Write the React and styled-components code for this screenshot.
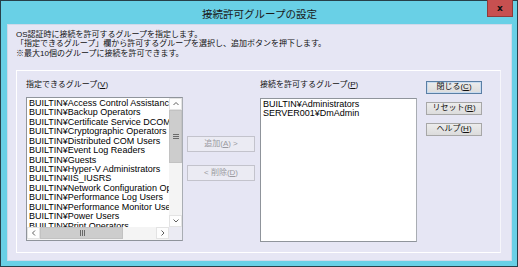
import React from "react";
import styled, { createGlobalStyle } from "styled-components";

const Global = createGlobalStyle`
  html, body { margin: 0; padding: 0; background: #2a3f47; }
  body { width: 518px; height: 267px; overflow: hidden; }
  * { box-sizing: border-box; }
`;

const FONT = `"Liberation Sans", "Noto Sans CJK JP", sans-serif`;
const LIST_FONT = `"Liberation Sans", "Noto Sans CJK JP", sans-serif`;

const Window = styled.div`
  width: 518px;
  height: 267px;
  border: 1px solid #27404a;
  background: #69d0e6;
  display: flex;
  flex-direction: column;
  padding: 0 5px 5px 6px;
  font-family: ${FONT};
  color: #000;
`;

const TitleBar = styled.div`
  height: 23px;
  display: grid;
  grid-template-columns: 1fr auto 1fr;
  align-items: center;
`;

const Title = styled.div`
  grid-column: 2;
  font-size: 10.5px;
  line-height: 12px;
  color: #1a1a1a;
  margin-top: 2px;
`;

const CloseButton = styled.div`
  grid-column: 3;
  justify-self: end;
  align-self: start;
  width: 26px;
  height: 17px;
  margin-top: -1px;
  margin-right: -1px;
  background: #c75050;
  border: 1px solid #8f3a3a;
  border-top: none;
  display: flex;
  align-items: center;
  justify-content: center;
  font-family: "DejaVu Sans", sans-serif;
  font-weight: bold;
  font-size: 9px;
  color: #111;
`;

const Client = styled.div`
  flex: 1;
  background: #e6e6f4;
  border: 1px solid #cfd9ea;
  display: flex;
  flex-direction: column;
  padding: 5px 10px 7px 8px;
`;

const Description = styled.div`
  font-size: 8px;
  line-height: 9.3px;
  color: #111;
  white-space: nowrap;
  margin-bottom: 12px;
`;

const Group = styled.div`
  flex: 1;
  border: 1px solid #ffffff;
  border-right-color: #f6f6fb;
  display: flex;
  align-items: flex-start;
  padding: 0 0 0 9px;
`;

const Column = styled.div`
  display: flex;
  flex-direction: column;
  margin-top: ${(p) => p.$top || 0}px;
  margin-left: ${(p) => p.$left || 0}px;
`;

const Label = styled.div`
  font-size: 8px;
  line-height: 12px;
  height: 12px;
  margin-bottom: ${(p) => p.$gap}px;
  white-space: nowrap;
  color: #111;
`;

const ListBox = styled.div`
  width: 157px;
  height: 144px;
  border: 1px solid #8f949b;
  border-right-color: #a9adb3;
  background: #fff;
  display: grid;
  grid-template-columns: ${(p) => (p.$scroll ? "1fr 13px" : "1fr")};
  grid-template-rows: ${(p) => (p.$scroll ? "1fr 13px" : "1fr")};
  overflow: hidden;
`;

const ListContent = styled.div`
  overflow: hidden;
  padding: 1px 0 0 2px;
  font-family: ${LIST_FONT};
  font-size: 9px;
  line-height: 9.45px;
  white-space: nowrap;
  color: #000;
`;

const Item = styled.div`
  height: 9.45px;
`;

const VScroll = styled.div`
  display: flex;
  flex-direction: column;
  background: #f4f4f4;
`;

const HScroll = styled.div`
  display: flex;
  background: #f4f4f4;
`;

const Arrow = styled.div`
  width: 13px;
  height: 12px;
  flex: none;
  display: flex;
  align-items: center;
  justify-content: center;
  background: #fdfdfd;
  border: 1px solid #e3e3e3;
`;

const Thumb = styled.div`
  flex: none;
  background: #cdcdcd;
  border: 1px solid #c2c2c2;
  display: flex;
  align-items: center;
  justify-content: center;
  ${(p) => (p.$h ? `width: 83px; height: 12px;` : `height: 53px; width: 13px;`)}
`;

const Track = styled.div`
  flex: 1;
`;

const Corner = styled.div`
  background: #ebebf3;
`;

const Button = styled.div`
  width: ${(p) => p.$w}px;
  height: ${(p) => p.$h}px;
  margin-bottom: ${(p) => p.$gap || 0}px;
  display: flex;
  align-items: center;
  justify-content: center;
  font-size: 8px;
  line-height: 10px;
  white-space: nowrap;
  border: 1px solid ${(p) => (p.$disabled ? "#c3c3cc" : p.$default ? "#5a7fa5" : "#a7a7a7")};
  background: ${(p) =>
    p.$disabled ? "#ebebf3" : "linear-gradient(#ececec, #dcdcdc)"};
  color: ${(p) => (p.$disabled ? "#9a9aa0" : "#111")};
  box-shadow: ${(p) => (p.$default ? "inset 0 0 0 1px #c8dbef" : "none")};
`;

const Chevron = ({ dir }) => {
  const paths = {
    up: "M1.5 5 L4 2.5 L6.5 5",
    down: "M1.5 2.5 L4 5 L6.5 2.5",
    left: "M5 1.5 L2.5 4 L5 6.5",
    right: "M2.5 1.5 L5 4 L2.5 6.5",
  };
  return (
    <svg width="8" height="8" viewBox="0 0 8 8">
      <path d={paths[dir]} fill="none" stroke="#606060" strokeWidth="1" />
    </svg>
  );
};

const GripV = () => (
  <svg width="6" height="6" viewBox="0 0 6 6">
    <path d="M0 1.5 H6 M0 3.5 H6 M0 5.5 H6" stroke="#6a6a6a" strokeWidth="1" />
  </svg>
);

const GripH = () => (
  <svg width="6" height="6" viewBox="0 0 6 6">
    <path d="M1.5 0 V6 M3.5 0 V6 M5.5 0 V6" stroke="#6a6a6a" strokeWidth="1" />
  </svg>
);

const available = [
  "BUILTIN¥Access Control Assistance Operators",
  "BUILTIN¥Backup Operators",
  "BUILTIN¥Certificate Service DCOM Access",
  "BUILTIN¥Cryptographic Operators",
  "BUILTIN¥Distributed COM Users",
  "BUILTIN¥Event Log Readers",
  "BUILTIN¥Guests",
  "BUILTIN¥Hyper-V Administrators",
  "BUILTIN¥IIS_IUSRS",
  "BUILTIN¥Network Configuration Operators",
  "BUILTIN¥Performance Log Users",
  "BUILTIN¥Performance Monitor Users",
  "BUILTIN¥Power Users",
  "BUILTIN¥Print Operators",
];

const allowed = ["BUILTIN¥Administrators", "SERVER001¥DmAdmin"];

export default function App() {
  return (
    <>
      <Global />
      <Window>
        <TitleBar>
          <Title>接続許可グループの設定</Title>
          <CloseButton>x</CloseButton>
        </TitleBar>
        <Client>
          <Description>
            <div>OS認証時に接続を許可するグループを指定します。</div>
            <div>「指定できるグループ」欄から許可するグループを選択し、追加ボタンを押下します。</div>
            <div>※最大10個のグループに接続を許可できます。</div>
          </Description>
          <Group>
            <Column $top={8}>
              <Label $gap={6}>
                指定できるグループ(<u>V</u>)
              </Label>
              <ListBox $scroll>
                <ListContent>
                  {available.map((t) => (
                    <Item key={t}>{t}</Item>
                  ))}
                </ListContent>
                <VScroll>
                  <Arrow>
                    <Chevron dir="up" />
                  </Arrow>
                  <Thumb>
                    <GripV />
                  </Thumb>
                  <Track />
                  <Arrow>
                    <Chevron dir="down" />
                  </Arrow>
                </VScroll>
                <HScroll>
                  <Arrow>
                    <Chevron dir="left" />
                  </Arrow>
                  <Thumb $h>
                    <GripH />
                  </Thumb>
                  <Track />
                  <Arrow>
                    <Chevron dir="right" />
                  </Arrow>
                </HScroll>
                <Corner />
              </ListBox>
            </Column>
            <Column $top={65} $left={4}>
              <Button $w={68} $h={16} $gap={13} $disabled>
                追加(<u>A</u>) &gt;
              </Button>
              <Button $w={68} $h={16} $disabled>
                &lt; 削除(<u>D</u>)
              </Button>
            </Column>
            <Column $top={8} $left={5}>
              <Label $gap={7}>
                接続を許可するグループ(<u>P</u>)
              </Label>
              <ListBox>
                <ListContent>
                  {allowed.map((t) => (
                    <Item key={t}>{t}</Item>
                  ))}
                </ListContent>
              </ListBox>
            </Column>
            <Column $top={10} $left={9}>
              <Button $w={56} $h={13} $gap={8} $default>
                閉じる(<u>C</u>)
              </Button>
              <Button $w={56} $h={13} $gap={8}>
                リセット(<u>R</u>)
              </Button>
              <Button $w={56} $h={13}>
                ヘルプ(<u>H</u>)
              </Button>
            </Column>
          </Group>
        </Client>
      </Window>
    </>
  );
}
